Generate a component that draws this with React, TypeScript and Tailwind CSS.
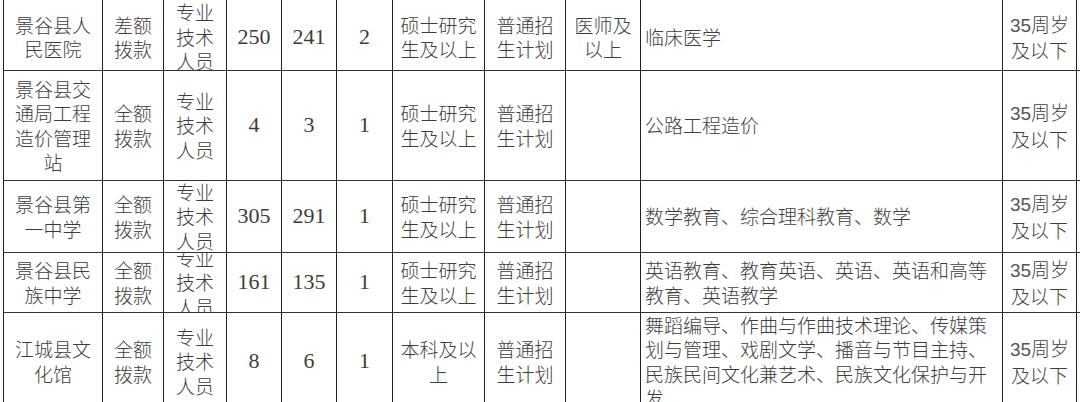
import React from 'react';

type Cell = { text: React.ReactNode; kind?: 'num' | 'left' };

const cjk = "font-['Noto_Sans_CJK_SC',sans-serif]";

const age = (
  <>
    <span className="font-['Liberation_Sans',sans-serif] text-[#555]">35</span>周岁及以下
  </>
);

const rows: { h: string; cells: Cell[] }[] = [
  {
    h: 'h-[71px] pt-[4px]',
    cells: [
      { text: '景谷县人民医院' },
      { text: '差额拨款' },
      { text: '专业技术人员' },
      { text: '250', kind: 'num' },
      { text: '241', kind: 'num' },
      { text: '2', kind: 'num' },
      { text: '硕士研究生及以上' },
      { text: '普通招生计划' },
      { text: '医师及以上' },
      { text: '临床医学', kind: 'left' },
      { text: age },
      { text: '' },
    ],
  },
  {
    h: 'h-[110px]',
    cells: [
      { text: '景谷县交通局工程造价管理站' },
      { text: '全额拨款' },
      { text: '专业技术人员' },
      { text: '4', kind: 'num' },
      { text: '3', kind: 'num' },
      { text: '1', kind: 'num' },
      { text: '硕士研究生及以上' },
      { text: '普通招生计划' },
      { text: '' },
      { text: '公路工程造价', kind: 'left' },
      { text: age },
      { text: '' },
    ],
  },
  {
    h: 'h-[72px]',
    cells: [
      { text: '景谷县第一中学' },
      { text: '全额拨款' },
      { text: '专业技术人员' },
      { text: '305', kind: 'num' },
      { text: '291', kind: 'num' },
      { text: '1', kind: 'num' },
      { text: '硕士研究生及以上' },
      { text: '普通招生计划' },
      { text: '' },
      { text: '数学教育、综合理科教育、数学', kind: 'left' },
      { text: age },
      { text: '' },
    ],
  },
  {
    h: 'h-[60px]',
    cells: [
      { text: '景谷县民族中学' },
      { text: '全额拨款' },
      { text: '专业技术人员' },
      { text: '161', kind: 'num' },
      { text: '135', kind: 'num' },
      { text: '1', kind: 'num' },
      { text: '硕士研究生及以上' },
      { text: '普通招生计划' },
      { text: '' },
      { text: '英语教育、教育英语、英语、英语和高等教育、英语教学', kind: 'left' },
      { text: age },
      { text: '' },
    ],
  },
  {
    h: 'h-[98px]',
    cells: [
      { text: '江城县文化馆' },
      { text: '全额拨款' },
      { text: '专业技术人员' },
      { text: '8', kind: 'num' },
      { text: '6', kind: 'num' },
      { text: '1', kind: 'num' },
      { text: '本科及以上' },
      { text: '普通招生计划' },
      { text: '' },
      {
        text: '舞蹈编导、作曲与作曲技术理论、传媒策划与管理、戏剧文学、播音与节目主持、民族民间文化兼艺术、民族文化保护与开发',
        kind: 'left',
      },
      { text: age },
      { text: '' },
    ],
  },
];

export default function App() {
  return (
    <div className={`w-[1080px] h-[402px] overflow-hidden bg-white pl-[3px] text-[#3d3d3d] ${cjk}`}>
      <div className="w-[1160px]">
        {rows.map((row, r) => (
          <div
            key={r}
            className="grid grid-cols-[100px_61px_63px_55px_55px_56px_92px_81px_75px_362px_74px_80px]"
          >
            {row.cells.map((c, i) => (
              <div
                key={i}
                className={`${row.h} flex items-center overflow-hidden border-r border-b border-r-[#222] border-b-[#333] px-1 text-[19px] leading-[24.5px] font-light ${
                  i === 0 ? 'border-l border-l-[#222]' : ''
                } ${c.kind === 'left' ? 'justify-start text-left pl-[4px]' : 'justify-center text-center'}`}
              >
                {c.kind === 'num' ? (
                  <span className="font-['Liberation_Serif',serif] text-[22px]">{c.text}</span>
                ) : (
                  <div className="w-full">{c.text}</div>
                )}
              </div>
            ))}
          </div>
        ))}
      </div>
    </div>
  );
}
